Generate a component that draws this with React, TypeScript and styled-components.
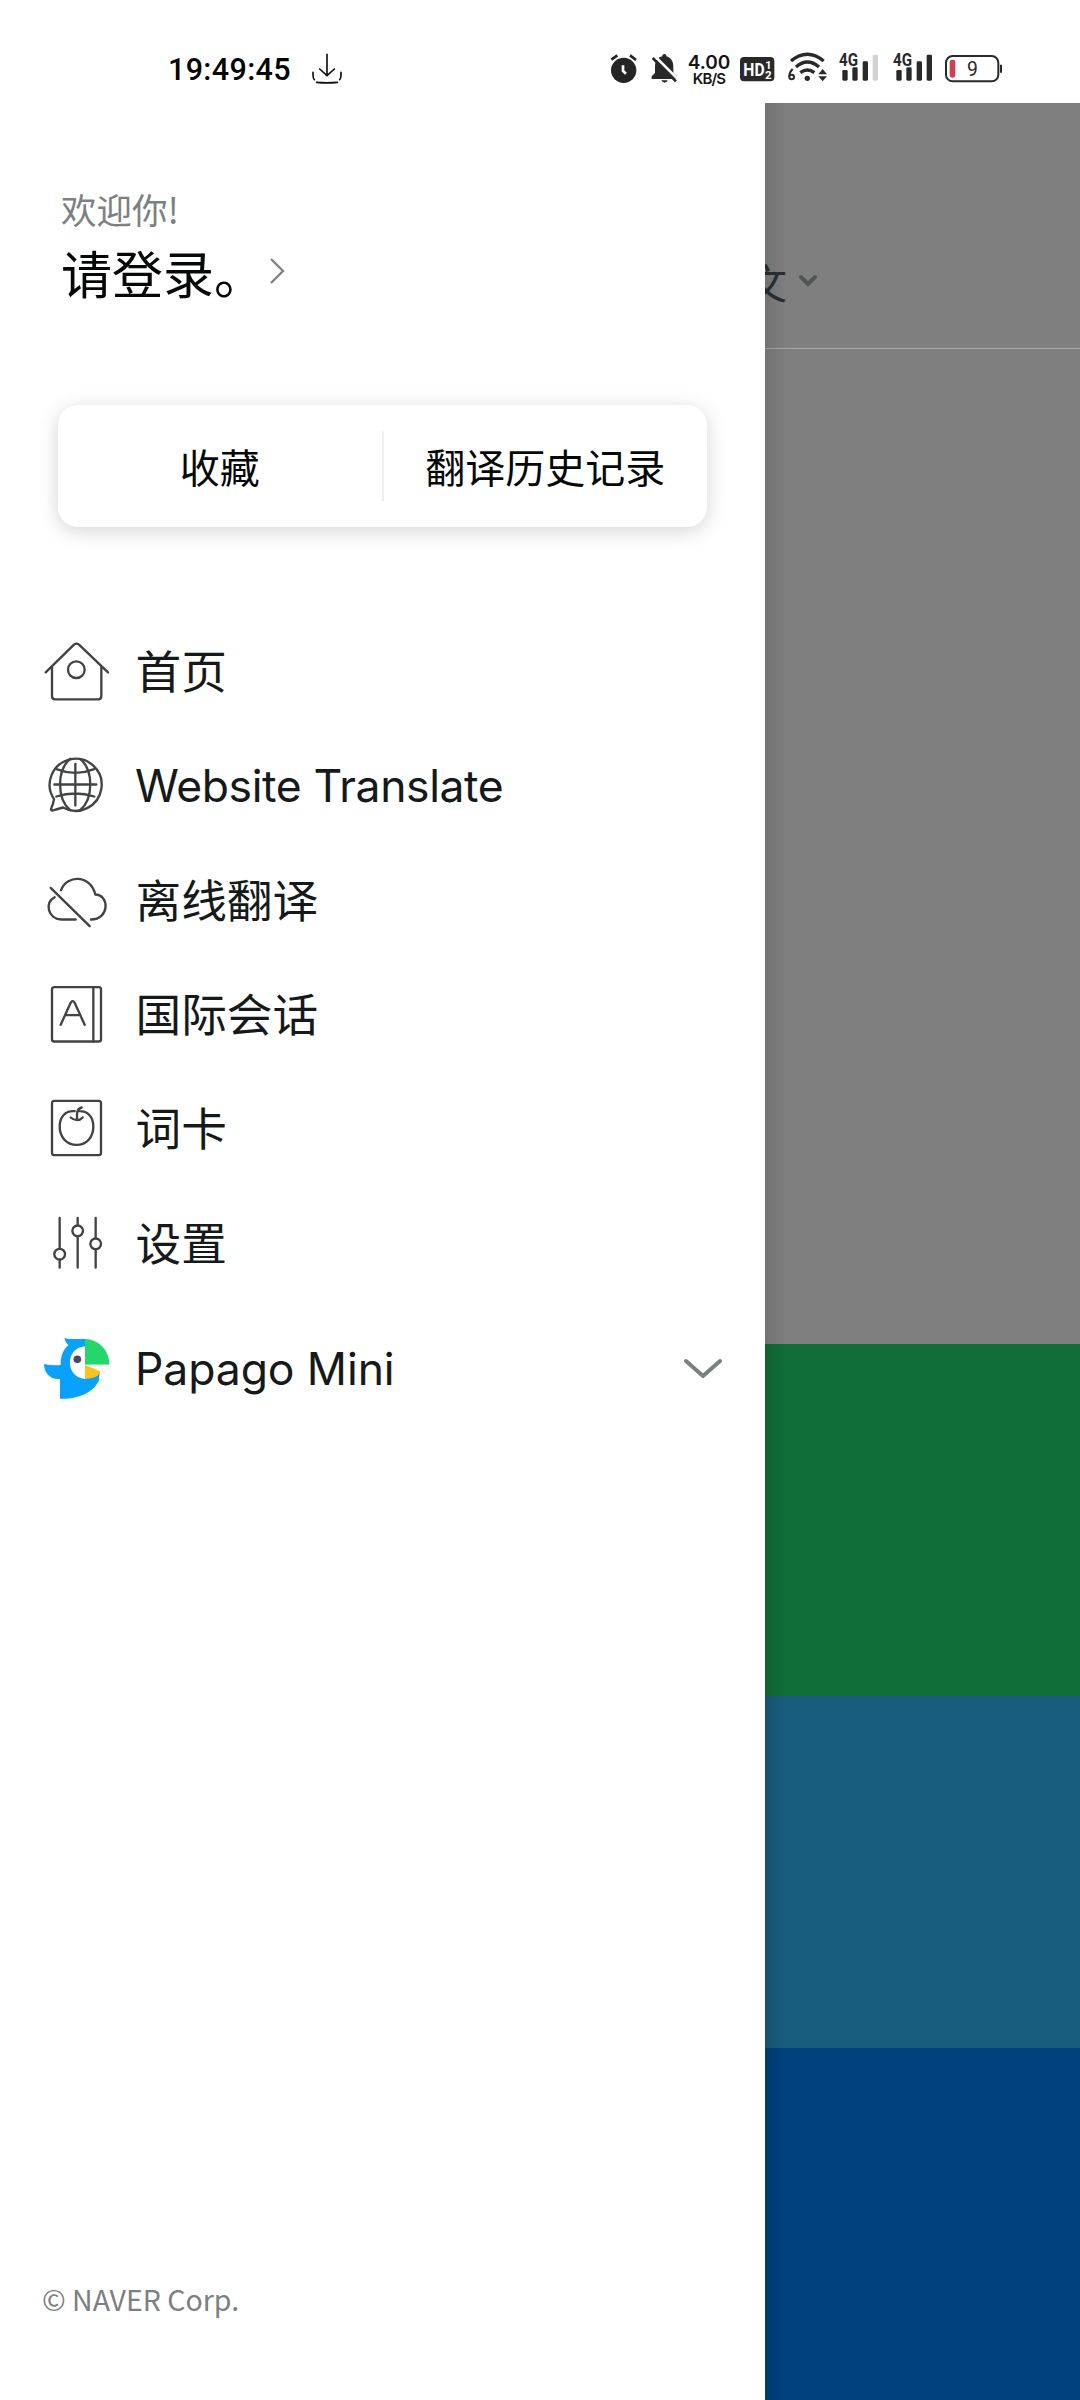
import React from "react";
import styled, { createGlobalStyle } from "styled-components";

const GlobalStyle = createGlobalStyle`
  * { box-sizing: border-box; }
  body { margin: 0; background: #fff; }
`;

const cjk = `"Noto Sans CJK SC", sans-serif`;

const Screen = styled.div`
  display: flex;
  flex-direction: column;
  width: 1080px;
  height: 2400px;
  overflow: hidden;
  background: #fff;
  font-family: ${cjk};
`;

const StatusBar = styled.header`
  display: flex;
  align-items: center;
  flex: none;
  height: 103px;
  padding: 40px 78px 3px 168px;
`;

const Clock = styled.time`
  width: 143px;
  font: 500 30.5px/60px Roboto, sans-serif;
  letter-spacing: 0.35px;
  color: #050505;
`;

const StatusIcons = styled.div`
  display: flex;
  align-items: center;
  margin-left: auto;
`;

const Glyph = styled.svg<{ $gap?: number }>`
  display: block;
  flex: none;
  height: 60px;
  margin-left: ${(p) => p.$gap ?? 0}px;
`;

const Speed = styled.div`
  display: flex;
  flex-direction: column;
  align-items: center;
  width: 42px;
  margin: 0 1px 0 9px;
  white-space: nowrap;
  color: #151515;
`;

const SpeedValue = styled.span`
  font: 600 19px/17px Inter, sans-serif;
  letter-spacing: 0;
`;

const SpeedUnit = styled.span`
  font: 600 15px/15px Inter, sans-serif;
  letter-spacing: -0.8px;
`;

const Body = styled.div`
  display: flex;
  flex: 1;
  min-height: 0;
`;

const Drawer = styled.nav`
  display: flex;
  flex-direction: column;
  flex: none;
  width: 765px;
  background: #fff;
`;

const Account = styled.section`
  display: flex;
  flex-direction: column;
  height: 302px;
  padding: 80px 0 0 61px;
`;

const Welcome = styled.span`
  font-size: 35.5px;
  line-height: 52px;
  color: #7c8081;
`;

const Login = styled.a`
  display: flex;
  align-items: center;
  font-size: 51px;
  line-height: 74px;
  color: #060808;
`;

const LoginArrow = styled.svg`
  width: 20px;
  height: 30px;
  margin: -2px 0 0 2px;
`;

const Shortcuts = styled.section`
  display: flex;
  align-items: center;
  flex: none;
  width: 649px;
  height: 122px;
  margin-left: 58px;
  border-radius: 20px;
  background: #fff;
  box-shadow: 0 4px 20px rgba(0, 0, 0, 0.17);
`;

const Shortcut = styled.a`
  flex: 1;
  padding-bottom: 1px;
  font-size: 40px;
  line-height: 60px;
  text-align: center;
  color: #060808;
`;

const ShortcutDivider = styled.i`
  width: 2px;
  height: 70px;
  background: #efefef;
`;

const Menu = styled.ul`
  display: flex;
  flex-direction: column;
  margin: 87px 0 0;
  padding: 0;
  list-style: none;
`;

const MenuRow = styled.li<{ $height?: number }>`
  display: flex;
  align-items: center;
  height: ${(p) => p.$height ?? 114.33}px;
  padding: 0 41px 0 40px;
`;

const MenuIcon = styled.svg`
  flex: none;
  width: 72px;
  height: 72px;
  margin-right: 23px;
  fill: none;
  stroke: #414344;
  stroke-width: 7;
  stroke-linecap: round;
  stroke-linejoin: round;
`;

const MenuLabel = styled.span<{ $latin?: boolean; $tracking?: number }>`
  flex: 1;
  padding: ${(p) => (p.$latin ? "1px 0 0" : "0 0 4px 0.5px")};
  font-family: ${(p) => (p.$latin ? "Inter, sans-serif" : cjk)};
  font-size: ${(p) => (p.$latin ? 44.5 : 45.7)}px;
  letter-spacing: ${(p) => p.$tracking ?? 0}px;
  line-height: 68px;
  white-space: nowrap;
  color: #15191a;
`;

const ExpandArrow = styled.svg`
  width: 42px;
  height: 30px;
`;

const Copyright = styled.footer`
  margin: auto 0 81px 42px;
  font-size: 28.5px;
  line-height: 40px;
  color: #7c8081;
`;

const Backdrop = styled.main`
  display: flex;
  flex-direction: column;
  flex: 1;
  position: relative;
  overflow: hidden;
  background: #7f7f7f;
  &::after {
    content: "";
    position: absolute;
    inset: 0 auto 0 0;
    width: 22px;
    background: linear-gradient(90deg, rgba(0, 0, 0, 0.1), rgba(0, 0, 0, 0));
  }
`;

const LanguageBar = styled.div`
  display: flex;
  align-items: center;
  height: 246px;
  padding-top: 113px;
  border-bottom: 1px solid #a8a8a8;
  font-size: 41px;
  color: #2b2e2f;
`;

const Language = styled.span`
  margin: -2px 0 0 -19px;
`;

const LanguageArrow = styled.svg`
  width: 22px;
  height: 16px;
  margin: -2px 0 0 10px;
`;

const Workspace = styled.div`
  flex: 1;
`;

const Band = styled.div<{ $color: string }>`
  flex: none;
  height: 352px;
  background: ${(p) => p.$color};
`;

const DownloadIcon = () => (
  <Glyph width={32} viewBox="483 0 96 180" fill="none" stroke="#111" strokeWidth={5} strokeLinecap="round">
    <path d="M531 43V106M509 87L531 107L553 87M489 97V106Q489 115 493 119M573 97V106Q573 115 569 119M500 127Q531 130 562 127" />
  </Glyph>
);

const AlarmIcon = () => (
  <Glyph width={27} viewBox="63 0 81 180">
    <circle cx="104" cy="91" r="38" fill="#252525" />
    <path d="M67 59L85 46M123 46L141 60" stroke="#252525" strokeWidth="8" fill="none" />
    <path d="M102 76V93L111 101" stroke="#fff" strokeWidth="8" fill="none" />
  </Glyph>
);

const MutedBellIcon = () => (
  <Glyph width={28} $gap={14} viewBox="186 0 84 180">
    <path
      d="M188 117V109L198 99V80C198 61 208 51 220 49V46Q226 38 232 46V49C246 53 253 64 253 80V98L264 109V117ZM217 121H236Q235 127 227 128Q219 127 217 121Z"
      fill="#292929"
    />
    <path d="M197 48L268 119" stroke="#fff" strokeWidth="8" />
    <path d="M191 54L261 124" stroke="#292929" strokeWidth="8" />
  </Glyph>
);

const HdIcon = () => (
  <Glyph width={35} $gap={9} viewBox="450 0 105 180" fill="#fff" fontFamily="Roboto, sans-serif" fontWeight="700">
    <rect x="450" y="51" width="103" height="73" rx="12" fill="#292929" />
    <text x="460" y="108" fontSize="54" textLength="64" lengthAdjust="spacingAndGlyphs">HD</text>
    <text x="526" y="86" fontSize="33">1</text>
    <text x="525" y="116" fontSize="35">2</text>
  </Glyph>
);

const WifiIcon = () => (
  <Glyph width={40} $gap={13} viewBox="-36 0 120 180" fill="none" stroke="#292929" strokeWidth={10}>
    <path d="M-27 63Q22 22 71 63M-12 81Q22 51 57 81M1 98Q22 82 43 98" />
    <circle cx="22" cy="115" r="8" fill="#292929" stroke="none" />
    <path d="M-22 87Q-33 98 -32 110" strokeWidth="6" />
    <circle cx="-25" cy="111" r="7" strokeWidth="6" />
    <path d="M55 103L68 87L81 103ZM55 109L68 124L81 109Z" fill="#292929" stroke="none" />
  </Glyph>
);

const SignalIcon = ({ gap, weak }: { gap: number; weak?: boolean }) => (
  <Glyph width={40} $gap={gap} viewBox="114 0 120 180" fill="#292929">
    <rect x="127" y="90" width="16" height="32" rx="4" />
    <rect x="157" y="82" width="16" height="40" rx="4" />
    <rect x="188" y="64" width="16" height="58" rx="4" />
    <rect x="218" y="44" width="16" height="78" rx="4" fill={weak ? "#d2d2d2" : "#292929"} />
    <text
      x="117"
      y="78"
      fontSize="53"
      fontFamily="Roboto, sans-serif"
      fontWeight="700"
      textLength="57"
      lengthAdjust="spacingAndGlyphs"
      stroke="#fff"
      strokeWidth="5"
      paintOrder="stroke"
    >
      4G
    </text>
  </Glyph>
);

const BatteryIcon = () => (
  <Glyph width={57} $gap={13} viewBox="435 0 171 180">
    <rect x="438" y="48" width="157" height="76" rx="20" fill="#fff" stroke="#292929" strokeWidth="6" />
    <rect x="449" y="59" width="17" height="54" rx="7" fill="#cb4251" />
    <path d="M603 74V98" stroke="#292929" strokeWidth="6" />
    <text x="517" y="107" fontSize="58" fontFamily="Roboto, sans-serif" textAnchor="middle" fill="#292929">9</text>
  </Glyph>
);

const HomeIcon = () => (
  <MenuIcon viewBox="30 46 216 216">
    <path d="M47 158L132 75Q139 69 147 75L234 158M66 142V230Q66 239 75 239H205Q214 239 214 230V142" />
    <circle cx="139" cy="150" r="25" />
  </MenuIcon>
);

const GlobeIcon = () => (
  <MenuIcon viewBox="30 388.5 216 216">
    <path d="M72 539A78 78 0 1 1 99 564Q83 568 68 573Q61 573 64 566Q70 553 72 539Z" />
    <path d="M121 418C80 450 80 540 121 572M150 418C191 450 191 540 150 572M136 433V558M73 495H199M79 449Q136 471 193 449M79 531Q136 513 193 531" />
  </MenuIcon>
);

const OfflineIcon = () => (
  <MenuIcon viewBox="30 41.4 216 216">
    <path d="M62 113L179 228M93 120C112 72 181 73 196 133C239 134 239 208 183 208M137 208H94C54 207 42 156 74 141" />
  </MenuIcon>
);

const PhrasebookIcon = () => (
  <MenuIcon viewBox="30 384.6 216 216">
    <rect x="66" y="412" width="147" height="163" rx="7" />
    <path d="M190 412V575M92 525L122 459Q128 449 134 459L164 525M106 496H150" />
  </MenuIcon>
);

const FlashcardIcon = () => (
  <MenuIcon viewBox="30 67.5 216 216">
    <rect x="66" y="94" width="147" height="163" rx="7" />
    <path d="M134 125C106 123 89 142 89 171C89 203 110 226 140 226C170 226 190 203 190 171C190 142 173 123 145 125M155 114Q142 117 141 133V151M122 144Q131 152 141 152Q151 152 158 144" />
  </MenuIcon>
);

const SettingsIcon = () => (
  <MenuIcon viewBox="30 410.4 216 216">
    <path d="M89 443V535M89 569V592M143 443V465M143 499V592M197 443V504M197 538V592" />
    <circle cx="89" cy="552" r="16" />
    <circle cx="143" cy="482" r="16" />
    <circle cx="197" cy="521" r="16" />
  </MenuIcon>
);

const ParrotLogo = styled(MenuIcon)`
  stroke: none;
`;

const ParrotIcon = () => (
  <ParrotLogo viewBox="30 39 216 216">
    <path
      d="M103 54Q111 57 120 57H165V176H209C195 213 152 238 90 236V177C62 180 42 160 42 132Q67 137 92 135C91 111 99 89 115 76Q106 69 103 54Z"
      fill="#08a1fb"
    />
    <path d="M209 153C209 163 208 173 204 184L165 190V150Z" fill="#08a1fb" />
    <path d="M165 79C104 84 105 173 165 177Z" fill="#fff" />
    <path d="M165 57C207 58 238 91 238 134H165Z" fill="#24d66b" />
    <path d="M165 134L211 153C207 169 190 177 165 176Z" fill="#f8c320" />
    <path d="M165 134H240L211 154Z" fill="#fff" />
    <circle cx="142" cy="118" r="11.5" fill="#4a4860" />
  </ParrotLogo>
);

const entries = [
  { label: "首页", Icon: HomeIcon },
  { label: "Website Translate", Icon: GlobeIcon, latin: true, tracking: -0.4 },
  { label: "离线翻译", Icon: OfflineIcon },
  { label: "国际会话", Icon: PhrasebookIcon },
  { label: "词卡", Icon: FlashcardIcon },
  { label: "设置", Icon: SettingsIcon },
];

export default function App() {
  return (
    <Screen lang="zh-CN">
      <GlobalStyle />
      <StatusBar>
        <Clock>19:49:45</Clock>
        <DownloadIcon />
        <StatusIcons>
          <AlarmIcon />
          <MutedBellIcon />
          <Speed>
            <SpeedValue>4.00</SpeedValue>
            <SpeedUnit>KB/S</SpeedUnit>
          </Speed>
          <HdIcon />
          <WifiIcon />
          <SignalIcon gap={10} weak />
          <SignalIcon gap={14} />
          <BatteryIcon />
        </StatusIcons>
      </StatusBar>
      <Body>
        <Drawer>
          <Account>
            <Welcome>欢迎你!</Welcome>
            <Login>
              请登录。
              <LoginArrow viewBox="0 0 20 30" fill="none" stroke="#7f8283" strokeWidth="2.4">
                <path d="M4 3L16 15L4 27" />
              </LoginArrow>
            </Login>
          </Account>
          <Shortcuts>
            <Shortcut>收藏</Shortcut>
            <ShortcutDivider />
            <Shortcut>翻译历史记录</Shortcut>
          </Shortcuts>
          <Menu>
            {entries.map(({ label, Icon, latin, tracking }) => (
              <MenuRow key={label}>
                <Icon />
                <MenuLabel $latin={latin} $tracking={tracking}>
                  {label}
                </MenuLabel>
              </MenuRow>
            ))}
            <MenuRow $height={138}>
              <ParrotIcon />
              <MenuLabel $latin $tracking={-0.1}>
                Papago Mini
              </MenuLabel>
              <ExpandArrow viewBox="0 0 42 30" fill="none" stroke="#7b7f80" strokeWidth="4" strokeLinecap="round" strokeLinejoin="round">
                <path d="M4 7L21 22L38 7" />
              </ExpandArrow>
            </MenuRow>
          </Menu>
          <Copyright>© NAVER Corp.</Copyright>
        </Drawer>
        <Backdrop>
          <LanguageBar>
            <Language>文</Language>
            <LanguageArrow viewBox="0 0 22 16" fill="none" stroke="#515556" strokeWidth="4" strokeLinecap="round">
              <path d="M4 4L11 11L18 4" />
            </LanguageArrow>
          </LanguageBar>
          <Workspace />
          <Band $color="#116d37" />
          <Band $color="#185d7c" />
          <Band $color="#00417e" />
        </Backdrop>
      </Body>
    </Screen>
  );
}
